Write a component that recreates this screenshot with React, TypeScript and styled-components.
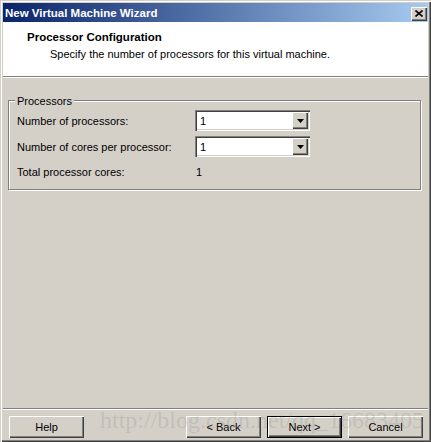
import React from "react";
import styled, { createGlobalStyle, css } from "styled-components";

const GlobalStyle = createGlobalStyle`
  * {
    box-sizing: border-box;
  }
  html,
  body {
    margin: 0;
    padding: 0;
    background: #d4d0c8;
  }
  body {
    font-family: "Liberation Sans", Arial, sans-serif;
    font-size: 11px;
    color: #000;
  }
`;

const raised = css`
  box-shadow: inset 1px 1px 0 #fff, inset -1px -1px 0 #404040,
    inset -2px -2px 0 #808080;
`;

const Window = styled.div`
  position: relative;
  width: 431px;
  height: 442px;
  padding: 3px;
  display: flex;
  flex-direction: column;
  background: #d4d0c8;
  box-shadow: inset 1px 1px 0 #d4d0c8, inset 2px 2px 0 #fff,
    inset -1px -1px 0 #404040, inset -2px -2px 0 #808080;
  overflow: hidden;
`;

const TitleBar = styled.div`
  height: 19px;
  flex: none;
  display: flex;
  align-items: center;
  justify-content: space-between;
  padding: 0 1px 0 2px;
  background: linear-gradient(to right, #0a246a, #a6caf0);
  color: #fff;
  font-weight: bold;
  font-size: 11.5px;
`;

const CloseButton = styled.div`
  width: 16px;
  height: 14px;
  margin-top: 2px;
  display: flex;
  align-items: center;
  justify-content: center;
  background: #d4d0c8;
  ${raised}
`;

const Header = styled.div`
  height: 55px;
  flex: none;
  background: #fff;
  border-bottom: 1px solid #808080;
  padding: 8px 0 0 24px;
`;

const Heading = styled.div`
  font-weight: bold;
  font-size: 11.5px;
  line-height: 14px;
`;

const Subtitle = styled.div`
  margin: 3px 0 0 23px;
  line-height: 14px;
`;

const Body = styled.div`
  flex: 1;
  border-top: 1px solid #fff;
  border-bottom: 1px solid #808080;
  padding: 22px 0 0 5px;
`;

const GroupBox = styled.div`
  position: relative;
  width: 413px;
  height: 90px;
  border: 1px solid #808080;
  box-shadow: 1px 1px 0 #fff, inset 1px 1px 0 #fff;
  padding: 9px 8px 0 8px;
`;

const Legend = styled.span`
  position: absolute;
  top: -7px;
  left: 6px;
  padding: 0 2px;
  line-height: 14px;
  background: #d4d0c8;
`;

const FieldGrid = styled.div`
  display: grid;
  grid-template-columns: 178px 115px;
  row-gap: 5px;
  align-items: center;
`;

const Label = styled.div<{ $spaced?: boolean }>`
  line-height: 14px;
  margin-top: ${(p) => (p.$spaced ? "3px" : "0")};
`;

const Value = styled.div`
  line-height: 14px;
  margin: 3px 0 0 1px;
`;

const Combo = styled.div`
  width: 115px;
  height: 21px;
  display: flex;
  align-items: center;
  padding: 2px;
  background: #fff;
  box-shadow: inset 1px 1px 0 #808080, inset 2px 2px 0 #404040,
    inset -1px -1px 0 #fff, inset -2px -2px 0 #d4d0c8;
`;

const ComboText = styled.span`
  flex: 1;
  padding-left: 3px;
  line-height: 14px;
`;

const DropButton = styled.div`
  width: 16px;
  height: 17px;
  display: flex;
  align-items: center;
  justify-content: center;
  background: #d4d0c8;
  ${raised}
`;

const Footer = styled.div`
  height: 30px;
  flex: none;
  border-top: 1px solid #fff;
  display: flex;
  gap: 6px;
  padding: 6px 5px 0 6px;
`;

const Button = styled.div<{ $default?: boolean; $push?: boolean }>`
  width: 75px;
  height: 22px;
  display: flex;
  align-items: center;
  justify-content: center;
  background: #d4d0c8;
  margin-right: ${(p) => (p.$push ? "auto" : "0")};
  ${raised}
  ${(p) =>
    p.$default &&
    css`
      border: 1px solid #000;
      box-shadow: inset 1px 1px 0 #fff, inset -1px -1px 0 #404040,
        inset -2px -2px 0 #808080;
    `}
`;

const Watermark = styled.div`
  position: absolute;
  left: 100px;
  top: 408px;
  font-family: "Liberation Serif", "Times New Roman", serif;
  font-size: 24px;
  line-height: 1;
  color: rgba(120, 116, 110, 0.2);
  pointer-events: none;
  white-space: nowrap;
`;

function ComboBox({ value }: { value: string }) {
  return (
    <Combo>
      <ComboText>{value}</ComboText>
      <DropButton>
        <svg width="7" height="4" viewBox="0 0 7 4">
          <path d="M0 0h7L3.5 4z" fill="#000" />
        </svg>
      </DropButton>
    </Combo>
  );
}

export default function App() {
  return (
    <>
      <GlobalStyle />
      <Window>
        <TitleBar>
          <span>New Virtual Machine Wizard</span>
          <CloseButton>
            <svg width="8" height="7" viewBox="0 0 8 7">
              <path d="M0.5 0.5l7 6M7.5 0.5l-7 6" stroke="#000" strokeWidth="1.6" />
            </svg>
          </CloseButton>
        </TitleBar>
        <Header>
          <Heading>Processor Configuration</Heading>
          <Subtitle>Specify the number of processors for this virtual machine.</Subtitle>
        </Header>
        <Body>
          <GroupBox>
            <Legend>Processors</Legend>
            <FieldGrid>
              <Label>Number of processors:</Label>
              <ComboBox value="1" />
              <Label>Number of cores per processor:</Label>
              <ComboBox value="1" />
              <Label $spaced>Total processor cores:</Label>
              <Value>1</Value>
            </FieldGrid>
          </GroupBox>
        </Body>
        <Footer>
          <Button $push>Help</Button>
          <Button>&lt; Back</Button>
          <Button $default>Next &gt;</Button>
          <Button>Cancel</Button>
        </Footer>
        <Watermark>http://blog.csdn.net/qq_16683405</Watermark>
      </Window>
    </>
  );
}
